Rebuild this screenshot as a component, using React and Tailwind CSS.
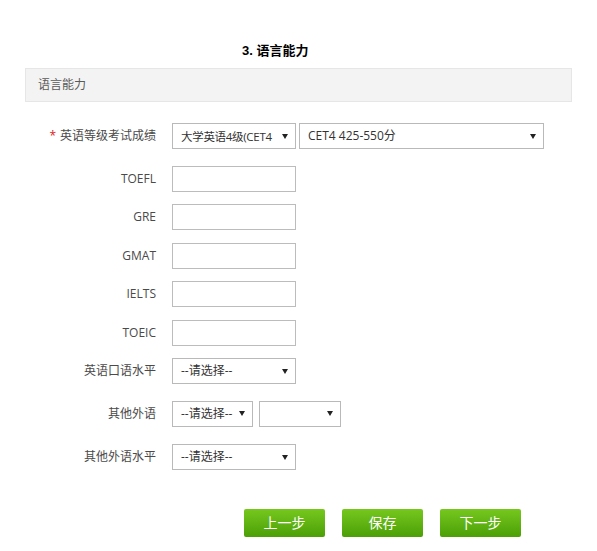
import React from "react";

const font = { fontFamily: '"Open Sans", "Noto Sans CJK SC", sans-serif' };

const Arrow = () => (
  <svg width="6" height="5" viewBox="0 0 6 5" className="shrink-0">
    <path d="M0 0 L6 0 L3 5 Z" fill="#222" />
  </svg>
);

const Select = ({ value, width, textClass = "" }) => (
  <div
    className={`flex items-center justify-between gap-[4px] h-[26px] border border-[#b9b9b9] bg-white pl-[8px] pr-[7px] text-[12px] text-[#333] overflow-hidden ${width}`}
  >
    <span className={`whitespace-nowrap ${textClass}`}>{value}</span>
    <Arrow />
  </div>
);

const TextBox = () => (
  <div className="w-[124px] h-[26px] border border-[#bcbcbc] bg-white" />
);

const Row = ({ label, required, children, className = "" }) => (
  <div className={`flex items-center h-[38.5px] ${className}`}>
    <div className="w-[156px] text-right text-[12px] text-[#4a4a4a] whitespace-nowrap">
      {required && <span className="text-[#e02020] mr-[4px]">*</span>}
      {label}
    </div>
    <div className="ml-[16px] flex items-center gap-[3px]">{children}</div>
  </div>
);

export default function App() {
  return (
    <div className="w-[597px] h-[551px] bg-white relative" style={font}>
      <div className="pt-[37px] pl-[242px] h-[68px]">
        <span
          className="text-[13px] font-bold text-black"
          style={{ fontFamily: '"Liberation Sans", "Noto Sans CJK SC", sans-serif' }}
        >
          3. 语言能力
        </span>
      </div>

      <div className="mx-[25px] h-[34px] border border-[#e6e6e6] bg-[#f3f3f3] flex items-center pl-[12px] text-[12px] text-[#5a5a5a]">
        语言能力
      </div>

      <div className="pt-[15px]">
        <Row label="英语等级考试成绩" required>
          <Select
            value="大学英语4级(CET4"
            width="w-[124px]"
            textClass="text-[11.5px] tracking-[-0.3px]"
          />
          <Select value="CET4 425-550分" width="w-[245px]" />
        </Row>
        <Row label="TOEFL" className="mt-[4px]">
          <TextBox />
        </Row>
        <Row label="GRE">
          <TextBox />
        </Row>
        <Row label="GMAT">
          <TextBox />
        </Row>
        <Row label="IELTS">
          <TextBox />
        </Row>
        <Row label="TOEIC">
          <TextBox />
        </Row>
        <Row label="英语口语水平">
          <Select value="--请选择--" width="w-[124px]" />
        </Row>
        <Row label="其他外语" className="mt-[4px]">
          <Select value="--请选择--" width="w-[81px]" />
          <Select value="" width="w-[82px] ml-[3px]" />
        </Row>
        <Row label="其他外语水平" className="mt-[5px]">
          <Select value="--请选择--" width="w-[124px]" />
        </Row>
      </div>

      <div className="flex gap-[17px] pl-[244px] mt-[32px]">
        {["上一步", "保存", "下一步"].map((t) => (
          <button
            key={t}
            className="w-[81px] h-[28px] rounded-[2px] bg-gradient-to-b from-[#76c81e] to-[#4c9f05] text-white text-[14px] flex items-center justify-center"
            style={{ fontFamily: '"Noto Sans CJK SC", sans-serif' }}
          >
            {t}
          </button>
        ))}
      </div>
    </div>
  );
}
